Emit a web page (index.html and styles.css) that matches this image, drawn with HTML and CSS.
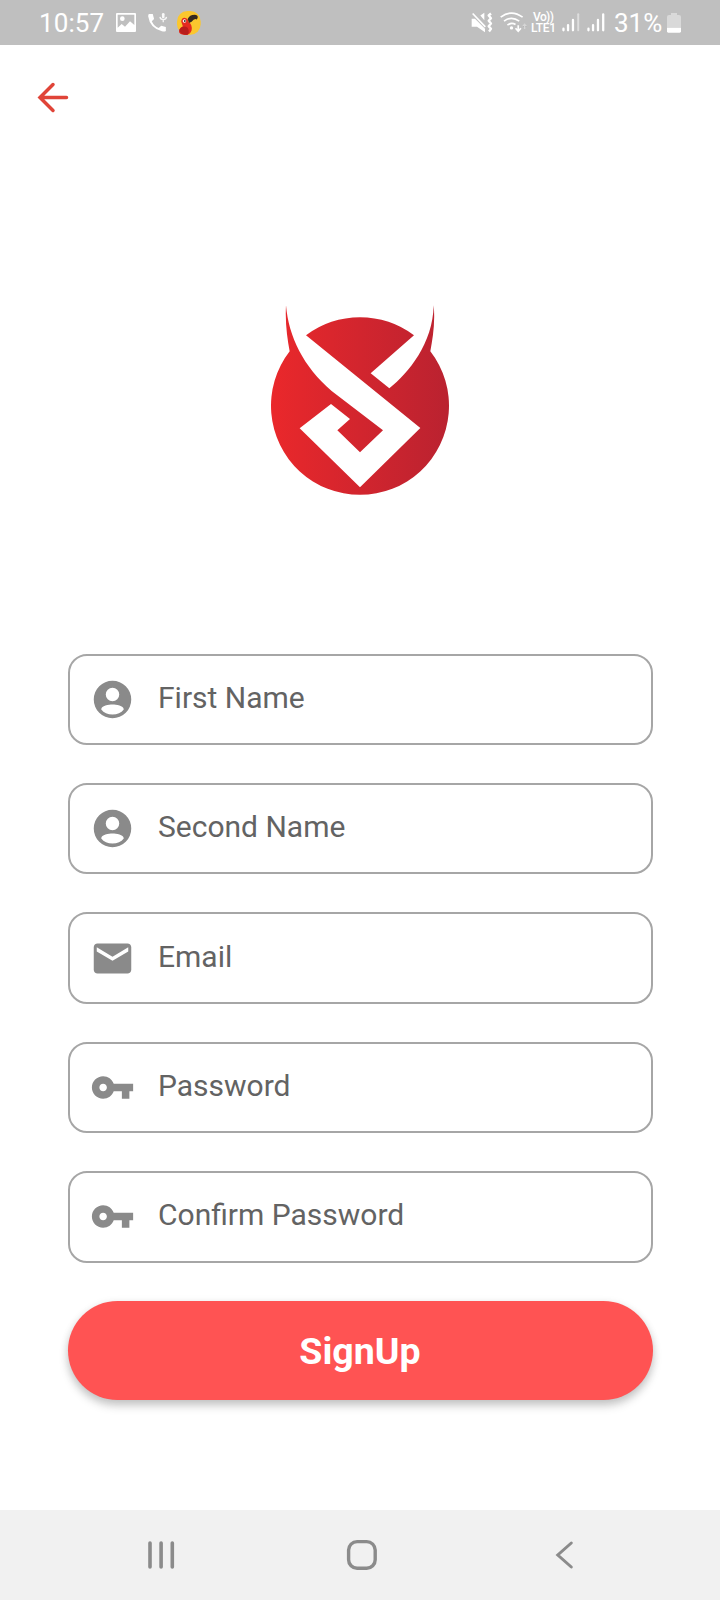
FILE: index.html
```html
<!DOCTYPE html>
<html lang="en">
<head>
<meta charset="utf-8">
<title>Sign up</title>
<link rel="stylesheet" href="styles.css">
</head>
<body>
<div class="screen">
  <header class="status">
    <div class="status-left">
      <span class="clock">10:57</span>
      <svg class="ico-picture" viewBox="0 0 60 57"><path fill="#fff" fill-rule="evenodd" d="M3 0H57Q60 0 60 3V54Q60 57 57 57H3Q0 57 0 54V3Q0 0 3 0ZM5 5V44L17 33L27 41L42 25L55 36V5ZM19 10a7 7 0 1 1 0 14a7 7 0 1 1 0-14Z"/></svg>
      <svg class="ico-call" viewBox="0 0 60 58"><path fill="#fff" d="M3 3H14L18 18L11 25Q18 40 32 46L40 39L54 43V55Q50 58 42 56Q5 46 0 10Q0 3 3 3Z"/><path fill="none" stroke="#fff" stroke-width="4" stroke-opacity=".85" d="M36 12Q37 20 46 20Q55 20 56 12M46 18V28"/><path stroke="#fff" stroke-width="8" stroke-linecap="round" stroke-opacity=".9" d="M46 4V12"/></svg>
      <svg class="ico-bird" viewBox="0 0 74 74"><rect width="73" height="73" rx="32" fill="#fbc72e"/><path fill="#e42b20" d="M13 32Q14 22 23 21Q34 22 36 35Q48 42 45 60Q40 74 24 74Q5 73 6 62Q8 51 18 47Z"/><path fill="#b81d1b" d="M7 58Q18 42 33 52Q40 66 32 74Q9 74 7 58Z"/><path fill="#35291f" d="M33 25Q39 10 59 12Q68 16 61 26Q54 21 45 33L37 37Z"/><circle cx="23" cy="31" r="5.500" fill="#fff"/><circle cx="24" cy="31" r="3" fill="#40332c"/></svg>
    </div>
    <div class="status-right">
      <svg class="ico-mute" viewBox="0 0 66 62"><path fill="#fff" d="M2 20H12L42 50V60L18 44H2ZM28 10L40 2V24Z"/><path stroke="#fff" stroke-width="5" d="M5 4L43 44"/><path fill="none" stroke="#fff" stroke-width="7" stroke-linejoin="round" d="M60 4L53 10L60 18L53 26L60 34L53 42L60 50L54 58"/></svg>
      <svg class="ico-wifi" viewBox="0 0 80 62"><g fill="none" stroke="#fff" stroke-width="5"><path d="M2 15Q34-9 67 15M12 27Q34 10 57 27M22 39Q34 29 46 37"/><path d="M54 39V56M46 48L54 57L62 48"/></g><circle cx="34" cy="47" r="5" fill="#fff"/><path stroke="#d6d6d6" stroke-width="4" d="M73 50V37M68 42L73 36L78 42"/></svg>
      <div class="volte"><span class="volte-top">Vo))</span><span class="volte-bottom">LTE1</span></div>
      <svg class="ico-signal" viewBox="0 0 54 58"><path stroke="#fff" stroke-width="7" stroke-linecap="round" d="M4 48V53M18 37V53M33 21V53"/><path stroke="#ddd" stroke-width="6" stroke-linecap="round" d="M49 4V53"/></svg>
      <svg class="ico-signal two" viewBox="0 0 54 58"><path stroke="#fff" stroke-width="7" stroke-linecap="round" d="M4 48V53M18 37V53M33 21V53M49 4V53"/></svg>
      <span class="battery-text">31%</span>
      <svg class="ico-battery" viewBox="0 0 42 60"><path fill="#d9d9d9" d="M12 0H30V6H36Q42 6 42 12V44H0V12Q0 6 6 6H12Z"/><path fill="#fff" d="M0 44H42V55Q42 59 38 59H4Q0 59 0 55Z"/></svg>
    </div>
  </header>

  <main class="content">
    <svg class="back" viewBox="0 0 34 34" fill="none" stroke="#e04438" stroke-width="3.500" stroke-linecap="round"><path d="M30.500 17.500H4.500M17 4.500L4 17.500L17 30.500"/></svg>

    <svg class="logo" viewBox="60 45 540 573">
      <defs><linearGradient id="red" gradientUnits="userSpaceOnUse" x1="63" y1="0" x2="597" y2="0"><stop offset="0" stop-color="#ea282b"/><stop offset=".5" stop-color="#d2252e"/><stop offset="1" stop-color="#ba2230"/></linearGradient></defs>
      <path fill="url(#red)" d="M168 136A268 268 0 0 1 492 136L362 250L418 295C475 250 549 160 551 46C556 100 548 145 541 184A267 267 0 1 1 119 184C112 145 105 100 108 46C116 140 160 230 245 303L399 421L330 487L262 421L300 387L243 342L149 415L330 592L511 414Z"/>
    </svg>

    <form class="form">
      <label class="field"><svg viewBox="0 0 24 24"><path fill-rule="evenodd" d="M12 2a10 10 0 1 0 0 20a10 10 0 1 0 0-20Zm0 3.700a3.600 3.600 0 1 1 0 7.200a3.600 3.600 0 1 1 0-7.200ZM6 17.300c0-2 4-2.600 6-2.600s6 .6 6 2.600c-1.300 1.900-3.500 2.700-6 2.700s-4.700-.8-6-2.700Z"/></svg><span>First Name</span></label>
      <label class="field"><svg viewBox="0 0 24 24"><path fill-rule="evenodd" d="M12 2a10 10 0 1 0 0 20a10 10 0 1 0 0-20Zm0 3.700a3.600 3.600 0 1 1 0 7.200a3.600 3.600 0 1 1 0-7.200ZM6 17.300c0-2 4-2.600 6-2.600s6 .6 6 2.600c-1.300 1.900-3.500 2.700-6 2.700s-4.700-.8-6-2.700Z"/></svg><span>Second Name</span></label>
      <label class="field"><svg viewBox="0 0 24 24"><path d="M20 4H4c-1.100 0-2 .9-2 2v12c0 1.100.9 2 2 2h16c1.100 0 2-.9 2-2V6c0-1.100-.9-2-2-2zm.4 4.200L12 13.200L3.600 8.200V6L12 11L20.400 6z"/></svg><span>Email</span></label>
      <label class="field"><svg viewBox="0 0 24 24"><path d="M12.650 10C11.830 7.670 9.610 6 7 6c-3.310 0-6 2.690-6 6s2.690 6 6 6c2.610 0 4.830-1.670 5.650-4H17v4h4v-4h2v-4H12.650zM7 14c-1.100 0-2-.9-2-2s.9-2 2-2 2 .9 2 2-.9 2-2 2z"/></svg><span>Password</span></label>
      <label class="field"><svg viewBox="0 0 24 24"><path d="M12.650 10C11.830 7.670 9.610 6 7 6c-3.310 0-6 2.690-6 6s2.690 6 6 6c2.610 0 4.830-1.670 5.650-4H17v4h4v-4h2v-4H12.650zM7 14c-1.100 0-2-.9-2-2s.9-2 2-2 2 .9 2 2-.9 2-2 2z"/></svg><span>Confirm Password</span></label>
      <button class="signup" type="button">SignUp</button>
    </form>
  </main>

  <nav class="navbar">
    <svg class="nav-recent" viewBox="0 0 28 30"><path stroke="#8b8b8b" stroke-width="3.600" stroke-linecap="round" d="M3 3V27M14.100 3V27M25.300 3V27"/></svg>
    <svg class="nav-home" viewBox="0 0 32 32"><rect x="2.600" y="2.600" width="26.600" height="26.600" rx="8.500" fill="none" stroke="#8b8b8b" stroke-width="3.400"/></svg>
    <svg class="nav-back" viewBox="0 0 20 30"><path fill="none" stroke="#8b8b8b" stroke-width="3" stroke-linecap="round" d="M16.300 3L2.800 15L16.300 27"/></svg>
  </nav>
</div>
</body>
</html>
```
FILE: styles.css
```css
* { box-sizing: border-box; }
body { margin: 0; font-family: Roboto, "Liberation Sans", sans-serif; background: #fff; }
svg { display: block; flex: none; }
.screen { width: 720px; height: 1600px; display: flex; flex-direction: column; background: #fff; overflow: hidden; }

.status { height: 45px; flex: none; display: flex; justify-content: space-between; padding: 0 39px 0 39px; background: #bfbfbf; color: #fff; }
.status-left, .status-right { display: flex; align-items: center; height: 45px; }
.clock, .battery-text { font-size: 26px; line-height: 45px; padding-top: 1px; }
.clock { width: 77px; letter-spacing: .1px; }
.ico-picture { width: 20px; height: 19px; }
.ico-call { width: 20px; height: 19px; margin-left: 12px; }
.ico-bird { width: 24px; height: 24px; margin-left: 9px; }
.ico-mute { width: 22px; height: 21px; margin-top: -1px; }
.ico-wifi { width: 27px; height: 21px; margin-left: 7px; }
.volte { width: 28px; margin-left: 4px; display: flex; flex-direction: column; font-size: 12px; line-height: 11px; font-weight: 500; }
.volte-top { padding-left: 2px; letter-spacing: -.6px; }
.volte-bottom { letter-spacing: -.3px; }
.ico-signal { width: 18px; height: 19px; margin-left: 3px; }
.ico-signal.two { margin-left: 7px; }
.battery-text { width: 49px; margin-left: 9px; }
.ico-battery { width: 14px; height: 20px; margin-left: 4px; }

.content { flex: 1; display: flex; flex-direction: column; align-items: center; }
.back { width: 34px; height: 34px; margin: 35px 0 0 36px; align-self: flex-start; }
.logo { width: 180px; height: 191px; margin-top: 191px; }
.form { width: 585px; margin-top: 157.600px; display: flex; flex-direction: column; gap: 37.900px; }
.field { height: 91.500px; display: flex; align-items: center; padding-left: 20px; border: 2px solid #a6a6a6; border-radius: 19px; }
.field svg { width: 45px; height: 45px; fill: #8a8a8a; }
.field span { margin: -3px 0 0 23.500px; font-size: 30px; line-height: 36px; color: #636363; }
.signup { height: 99.500px; border: 0; border-radius: 50px; padding: 1px 0 0; background: #ff5353; color: #fff; font: 700 37.500px/42px Roboto, sans-serif; box-shadow: 0 6px 10px rgba(0,0,0,.18), 0 2px 9px rgba(0,0,0,.1); }

.navbar { height: 90px; flex: none; display: flex; align-items: center; padding: 0 145px 0 147px; background: #f1f1f1; }
.nav-recent { width: 28px; height: 30px; }
.nav-home { width: 32px; height: 32px; margin-left: 171px; }
.nav-back { width: 20px; height: 30px; margin-left: auto; }
```
